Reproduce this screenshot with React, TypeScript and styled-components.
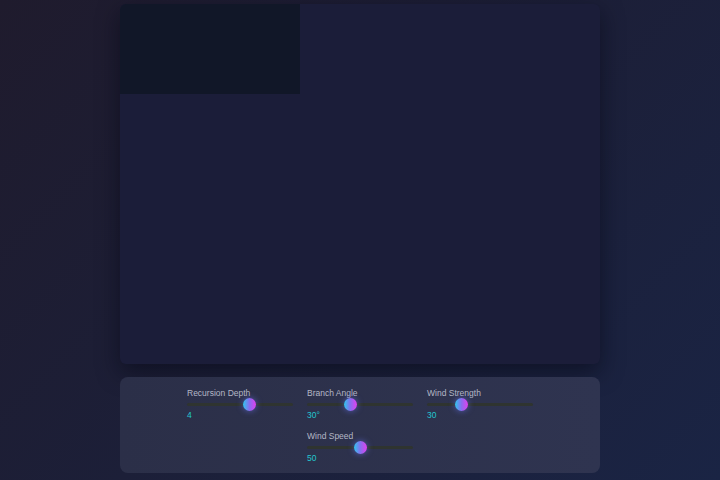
import React from "react";
import styled, { createGlobalStyle } from "styled-components";

const Global = createGlobalStyle`
  html, body {
    margin: 0;
    padding: 0;
    height: 100%;
  }
  body {
    background: linear-gradient(135deg, #1f1b2d 0%, #1c1f38 50%, #1a2444 100%);
    font-family: "Liberation Sans", Arial, sans-serif;
    overflow: hidden;
  }
`;

const controls = [
  { label: "Recursion Depth", min: 1, max: 6, value: 4, suffix: "" },
  { label: "Branch Angle", min: 10, max: 60, value: 30, suffix: "°" },
  { label: "Wind Strength", min: 0, max: 100, value: 30, suffix: "" },
  { label: "Wind Speed", min: 0, max: 100, value: 50, suffix: "" },
];

export default function App() {
  return (
    <>
      <Global />
      <Page>
        <Stage>
          <Canvas />
        </Stage>
        <Panel>
          {controls.map((c) => (
            <Control key={c.label}>
              <Label>{c.label}</Label>
              <Slider type="range" min={c.min} max={c.max} defaultValue={c.value} />
              <Value>
                {c.value}
                {c.suffix}
              </Value>
            </Control>
          ))}
        </Panel>
      </Page>
    </>
  );
}

const Page = styled.div`
  height: 480px;
  display: flex;
  flex-direction: column;
  align-items: center;
  padding-top: 4px;
  gap: 13px;
  box-sizing: border-box;
`;

const Stage = styled.div`
  width: 480px;
  height: 360px;
  background: #1b1d39;
  border-radius: 6px;
  box-shadow: 0 8px 22px rgba(6, 8, 20, 0.55);
  overflow: hidden;
`;

const Canvas = styled.div`
  width: 180px;
  height: 90px;
  background: #111728;
`;

const Panel = styled.div`
  width: 480px;
  height: 96px;
  box-sizing: border-box;
  padding: 11px 60px 0;
  background: linear-gradient(90deg, #2b2f48 0%, #2f3450 100%);
  border-radius: 8px;
  display: flex;
  flex-wrap: wrap;
  justify-content: center;
  align-content: flex-start;
  column-gap: 14px;
  row-gap: 11px;
`;

const Control = styled.div`
  width: 106px;
  display: flex;
  flex-direction: column;
`;

const Label = styled.span`
  font-size: 8.5px;
  color: #b4b7c6;
  line-height: 10px;
`;

const Value = styled.span`
  font-size: 8.5px;
  color: #22c7cf;
  line-height: 10px;
`;

const Slider = styled.input`
  -webkit-appearance: none;
  appearance: none;
  width: 106px;
  height: 12px;
  margin: 0;
  background: transparent;
  outline: none;

  &::-webkit-slider-runnable-track {
    height: 3px;
    border-radius: 2px;
    background: #2f3430;
  }

  &::-webkit-slider-thumb {
    -webkit-appearance: none;
    appearance: none;
    width: 13px;
    height: 13px;
    margin-top: -5px;
    border-radius: 50%;
    background: linear-gradient(90deg, #2fc6f0 0%, #8a6cf0 50%, #e040f0 100%);
    box-shadow: 0 0 6px rgba(110, 120, 255, 0.6);
  }
`;
